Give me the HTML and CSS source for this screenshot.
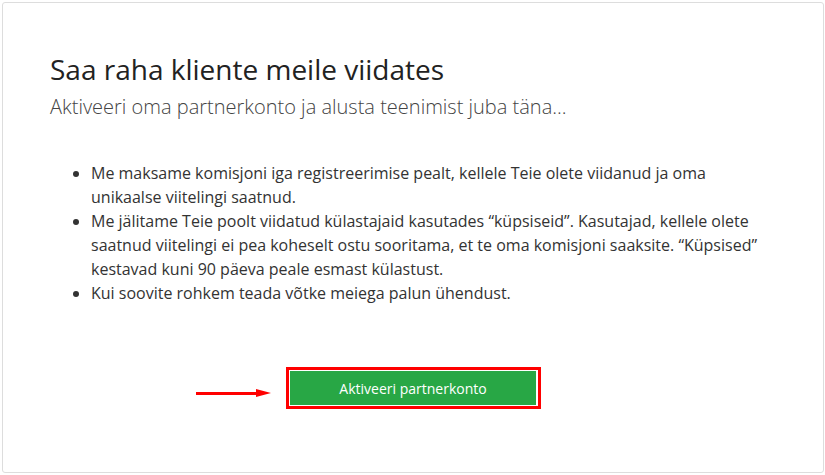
FILE: index.html
```html
<!DOCTYPE html>
<html lang="et">
<head>
    <meta charset="UTF-8">
    <title>Partnerprogramm</title>
    <link rel="stylesheet" href="styles.css">
</head>
<body>
    <div class="card">
        <h1 class="title">Saa raha kliente meile viidates</h1>
        <p class="subtitle">Aktiveeri oma partnerkonto ja alusta teenimist juba täna...</p>
        <ul class="info">
            <li>Me maksame komisjoni iga registreerimise pealt, kellele Teie olete viidanud ja oma unikaalse viitelingi saatnud.</li>
            <li>Me jälitame Teie poolt viidatud külastajaid kasutades “küpsiseid”. Kasutajad, kellele olete saatnud viitelingi ei pea koheselt ostu sooritama, et te oma komisjoni saaksite. “Küpsised” kestavad kuni 90 päeva peale esmast külastust.</li>
            <li>Kui soovite rohkem teada võtke meiega palun ühendust.</li>
        </ul>
        <div class="action">
            <span class="arrow"></span>
            <div class="highlight">
                <button class="btn">Aktiveeri partnerkonto</button>
            </div>
        </div>
    </div>
</body>
</html>
```

FILE: styles.css
```css
body {
    font-family: "Open Sans", Arial, sans-serif;
    margin: 0;
    padding: 2px 1px 2px 2px;
    background: #fff;
    color: #333;
}
.card {
    height: 471px;
    box-sizing: border-box;
    border: 1px solid #ddd;
    border-radius: 3px;
    padding: 48px 48px 0 47px;
}
.title {
    font-size: 28px;
    font-weight: 400;
    color: #222;
    margin: 0;
    line-height: 36px;
}
.subtitle {
    font-size: 20px;
    font-weight: 300;
    color: #444;
    margin: 7px 0 0;
    line-height: 26px;
}
.info {
    margin: 41px 0 0;
    padding-left: 41px;
    font-size: 16px;
    line-height: 24px;
    color: #333;
}
.action {
    display: flex;
    align-items: center;
    margin-top: 62px;
    padding-left: 146px;
}
.arrow {
    position: relative;
    width: 60px;
    height: 3px;
    background: #f00;
    margin: 10px 30px 0 0;
}
.arrow::after {
    content: "";
    position: absolute;
    right: -15px;
    top: -3px;
    border-left: 15px solid #f00;
    border-top: 4.5px solid transparent;
    border-bottom: 4.5px solid transparent;
}
.highlight {
    border: 3px solid #f00;
    padding: 1px 2px 1px 1px;
    background: #fff;
}
.btn {
    display: block;
    width: 246px;
    height: 34px;
    border: none;
    background: #28a745;
    color: #fff;
    font-family: inherit;
    font-size: 14px;
    padding: 0;
}
```
